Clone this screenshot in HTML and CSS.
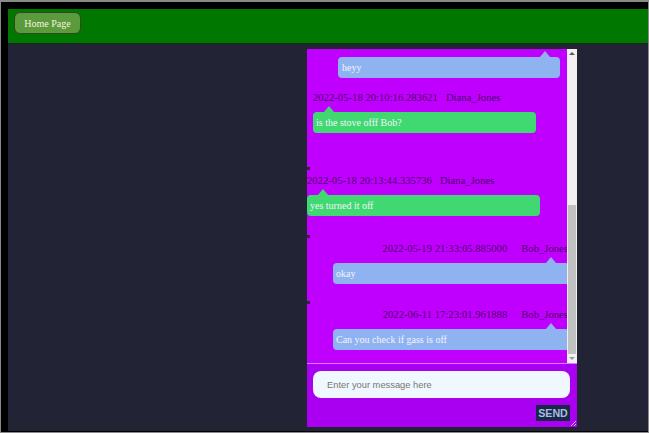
FILE: index.html
```html
<!DOCTYPE html>
<html lang="en">
<head>
<meta charset="utf-8">
<title>Chat</title>
<link rel="stylesheet" href="styles.css">
</head>
<body>
<div class="app">
  <header class="topbar">
    <button class="home-btn" type="button">Home Page</button>
  </header>
  <main class="main">
    <section class="chat">
      <div class="chat-body">
        <div class="messages">
          <ul class="thread">
            <li class="history"></li>
            <li class="msg msg-out msg-early msg-a">
              <div class="bubble">heyy</div>
            </li>
            <li class="msg msg-in msg-early msg-b">
              <div class="meta"><span class="time">2022-05-18 20:10:16.283621</span><span class="user">Diana_Jones</span></div>
              <div class="bubble">is the stove offf Bob?</div>
            </li>
            <li class="msg msg-in msg-c">
              <span class="dot"></span>
              <div class="meta"><span class="time">2022-05-18 20:13:44.335736</span><span class="user">Diana_Jones</span></div>
              <div class="bubble">yes turned it off</div>
            </li>
            <li class="msg msg-out msg-d">
              <span class="dot"></span>
              <div class="meta"><span class="time">2022-05-19 21:33:05.885000</span><span class="user">Bob_Jones</span></div>
              <div class="bubble">okay</div>
            </li>
            <li class="msg msg-out">
              <span class="dot"></span>
              <div class="meta"><span class="time">2022-06-11 17:23:01.961888</span><span class="user">Bob_Jones</span></div>
              <div class="bubble">Can you check if gass is off</div>
            </li>
          </ul>
        </div>
        <div class="scrollbar" aria-hidden="true">
          <span class="sb-btn sb-up"></span>
          <span class="sb-track"><span class="sb-thumb"></span></span>
          <span class="sb-btn sb-down"></span>
        </div>
      </div>
      <form class="composer">
        <input class="msg-input" type="text" placeholder="Enter your message here">
        <button class="send" type="button">SEND</button>
      </form>
    </section>
  </main>
</div>
</body>
</html>
```
FILE: styles.css
```css
html {
  background: #8a8a8a;
  height: 100%;
}

body {
  margin: 2px 1px 1px 1px;
  padding: 7px 0 1px 7px;
  height: 430px;
  box-sizing: border-box;
  background: #000;
  font-family: "Liberation Serif", "Times New Roman", serif;
  overflow: hidden;
}

.app {
  height: 100%;
  background: #222335;
  display: flex;
  flex-direction: column;
}

.topbar {
  flex: none;
  height: 35px;
  box-sizing: border-box;
  background: #007800;
  border-bottom: 1px solid #0d2d10;
  padding: 3px 6px;
}

.home-btn {
  display: block;
  width: 67px;
  height: 22px;
  padding: 0;
  background: #5c9a3e;
  border: 1px solid #2c4a1c;
  border-radius: 6px;
  color: #f3f3df;
  font-family: "Liberation Serif", "Times New Roman", serif;
  font-size: 10px;
}

.main {
  flex: 1;
  padding: 5px 0 0 299px;
}

.chat {
  width: 270px;
  height: 378px;
  display: flex;
  flex-direction: column;
  background: #c000ff;
}

.chat-body {
  flex: none;
  height: 314px;
  display: flex;
}

.messages {
  width: 260px;
  flex: none;
  overflow: hidden;
  display: flex;
  flex-direction: column-reverse;
}

.scrollbar {
  width: 10px;
  flex: none;
  display: flex;
  flex-direction: column;
  background: #f1f1f1;
}

.sb-btn {
  height: 9px;
  flex: none;
  display: flex;
  align-items: center;
  justify-content: center;
}

.sb-up::before,
.sb-down::before {
  content: "";
  border-left: 3px solid transparent;
  border-right: 3px solid transparent;
}

.sb-up::before {
  border-bottom: 3px solid #5a5a5a;
}

.sb-down::before {
  border-top: 3px solid #9a9a9a;
}

.sb-track {
  flex: 1;
  display: flex;
  flex-direction: column;
  justify-content: flex-end;
}

.sb-thumb {
  height: 149px;
  margin: 0 1px;
  background: #c1c1c1;
}

.thread {
  flex: none;
  list-style: none;
  margin: 0;
  padding: 0 0 13px 0;
}

.history {
  height: 311px;
  margin-bottom: 8px;
}

.msg {
  margin-bottom: 17px;
}

.msg:last-child {
  margin-bottom: 0;
}

.msg-a {
  margin-bottom: 13px;
}

.msg-b {
  margin-bottom: 34px;
  padding-left: 6px;
}

.msg-c {
  margin-bottom: 19px;
}

.dot {
  display: block;
  width: 3px;
  height: 3px;
  background: #2e2a3a;
  margin-bottom: 4px;
}

.meta {
  height: 12px;
  line-height: 12px;
  font-size: 10.67px;
  color: #4d0066;
  white-space: nowrap;
}

.msg-in .time {
  margin-right: 8px;
}

.msg-out .meta {
  text-align: right;
  margin-right: -1px;
}

.msg-out .time {
  margin-right: 14px;
}

.bubble {
  position: relative;
  height: 21px;
  line-height: 21px;
  padding: 0 3px;
  box-sizing: border-box;
  border-radius: 4px;
  font-size: 10px;
  color: #f4f4ff;
  white-space: nowrap;
  margin-top: 9px;
}

.bubble::before {
  content: "";
  position: absolute;
  top: -6px;
  border-left: 5px solid transparent;
  border-right: 5px solid transparent;
  border-bottom: 6px solid transparent;
}

.msg-in .bubble {
  background: #40d870;
  width: 233px;
}

.msg-in .bubble::before {
  left: 11px;
  border-bottom-color: #40d870;
}

.msg-out .bubble {
  background: #8fb2f0;
  width: 236px;
  margin-left: 26px;
}

.msg-out .bubble::before {
  right: 13px;
  border-bottom-color: #8fb2f0;
}

.msg-a .bubble {
  margin-top: 0;
  margin-left: 31px;
  width: 222px;
  padding-left: 4px;
}

.msg-a .bubble::before {
  right: 10px;
}

.msg-b .bubble {
  width: 223px;
}

.composer {
  flex: 1;
  position: relative;
  margin: 0;
  border-top: 1px solid #d27dff;
  background: #a900f2;
  padding: 7px 7px 6px 6px;
  display: flex;
  flex-direction: column;
  align-items: flex-end;
  gap: 7px;
}

.composer::after {
  content: "";
  position: absolute;
  right: 1px;
  bottom: 1px;
  width: 5px;
  height: 5px;
  background: linear-gradient(135deg, transparent 0 45%, #d9b3ef 45% 58%, transparent 58% 72%, #d9b3ef 72% 85%, transparent 85%);
}

.msg-input {
  align-self: stretch;
  height: 27px;
  box-sizing: border-box;
  border: none;
  border-radius: 8px;
  background: #f0f8ff;
  padding: 0 14px;
  margin: 0;
  font-family: "Liberation Sans", Arial, sans-serif;
  font-size: 9.33px;
  color: #222;
  outline: none;
}

.msg-input::placeholder {
  color: #767676;
}

.send {
  width: 34px;
  height: 16px;
  padding: 0;
  border: none;
  background: #1a2848;
  color: #a9bde3;
  font-family: "Liberation Sans", Arial, sans-serif;
  font-weight: bold;
  font-size: 10.67px;
}
```
